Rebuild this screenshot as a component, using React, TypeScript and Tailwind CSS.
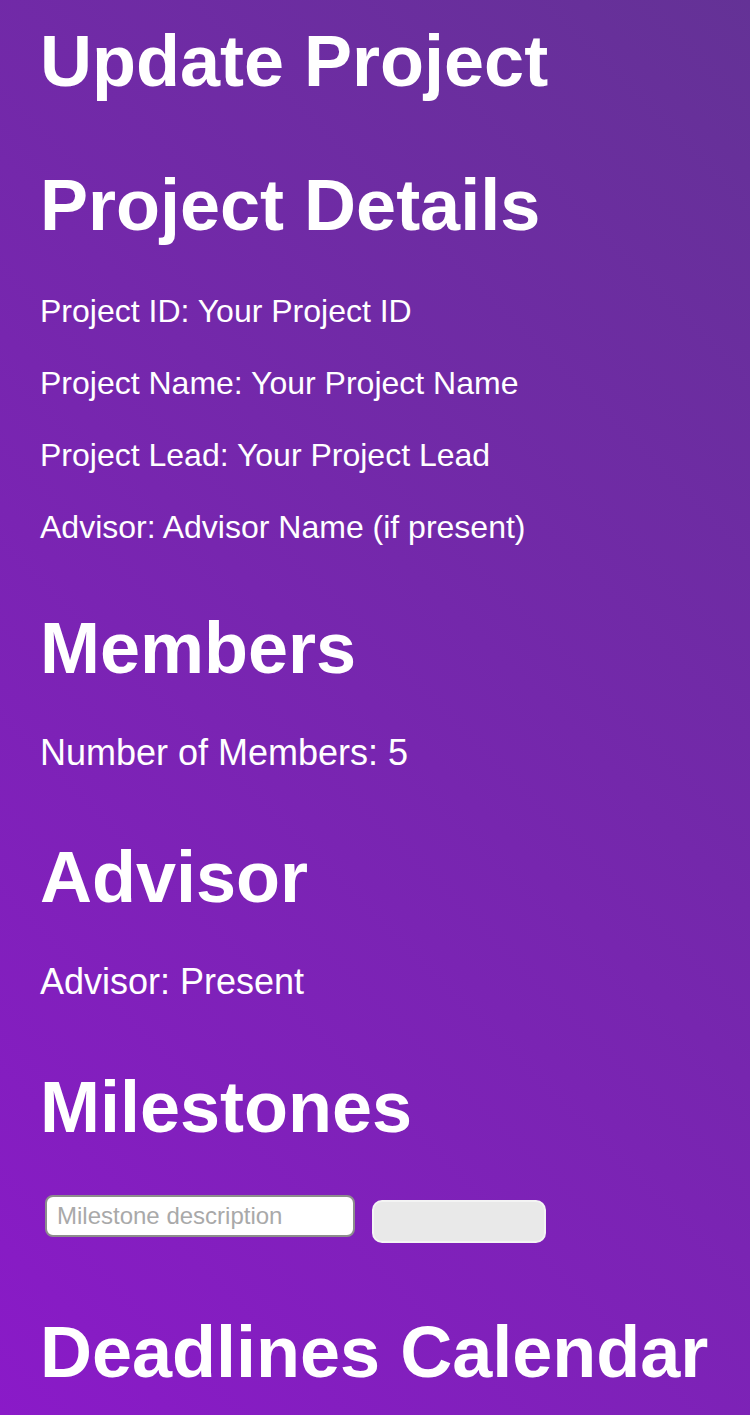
import React from "react";

const details = [
  "Project ID: Your Project ID",
  "Project Name: Your Project Name",
  "Project Lead: Your Project Lead",
  "Advisor: Advisor Name (if present)",
];

function Heading({ children, className = "" }: { children: React.ReactNode; className?: string }) {
  return (
    <h2 className={`text-[72px] leading-[80px] font-bold text-white ${className}`}>
      {children}
    </h2>
  );
}

export default function App() {
  return (
    <main
      className="min-h-screen bg-[linear-gradient(45deg,#8a1ac8,#643296)] text-white px-[40px] pt-[21px] pb-[23px]"
      style={{ fontFamily: '"Liberation Sans", Arial, Helvetica, sans-serif' }}
    >
      <h1 className="text-[72px] leading-[80px] font-bold">Update Project</h1>

      {/* ── Project details ── */}
      <Heading className="mt-[64px]">Project Details</Heading>
      <div className="mt-[46px] flex flex-col gap-[32px]">
        {details.map((line) => (
          <p key={line} className="text-[32px] leading-[40px]">
            {line}
          </p>
        ))}
      </div>

      {/* ── Members ── */}
      <Heading className="mt-[61px]">Members</Heading>
      <p className="mt-[43px] text-[36px] leading-[44px]">Number of Members: 5</p>

      {/* ── Advisor ── */}
      <Heading className="mt-[62px]">Advisor</Heading>
      <p className="mt-[43px] text-[36px] leading-[44px]">Advisor: Present</p>

      {/* ── Milestones ── */}
      <Heading className="mt-[63px]">Milestones</Heading>
      <form className="mt-[48px] flex items-start" onSubmit={(e) => e.preventDefault()}>
        <input
          type="text"
          placeholder="Milestone description"
          className="ml-[5px] h-[42px] w-[310px] rounded-[8px] border-2 border-[#8d8d8d] bg-white px-[10px] text-[24px] text-black placeholder:text-[#a9a9a9] outline-none"
        />
        <button
          type="submit"
          className="ml-[17px] mt-[5px] h-[43px] w-[174px] rounded-[10px] border-2 border-[#f4f4f4] bg-[#e9e9e9]"
        />
      </form>

      {/* ── Deadlines ── */}
      <Heading className="mt-[69px]">Deadlines Calendar</Heading>
    </main>
  );
}
